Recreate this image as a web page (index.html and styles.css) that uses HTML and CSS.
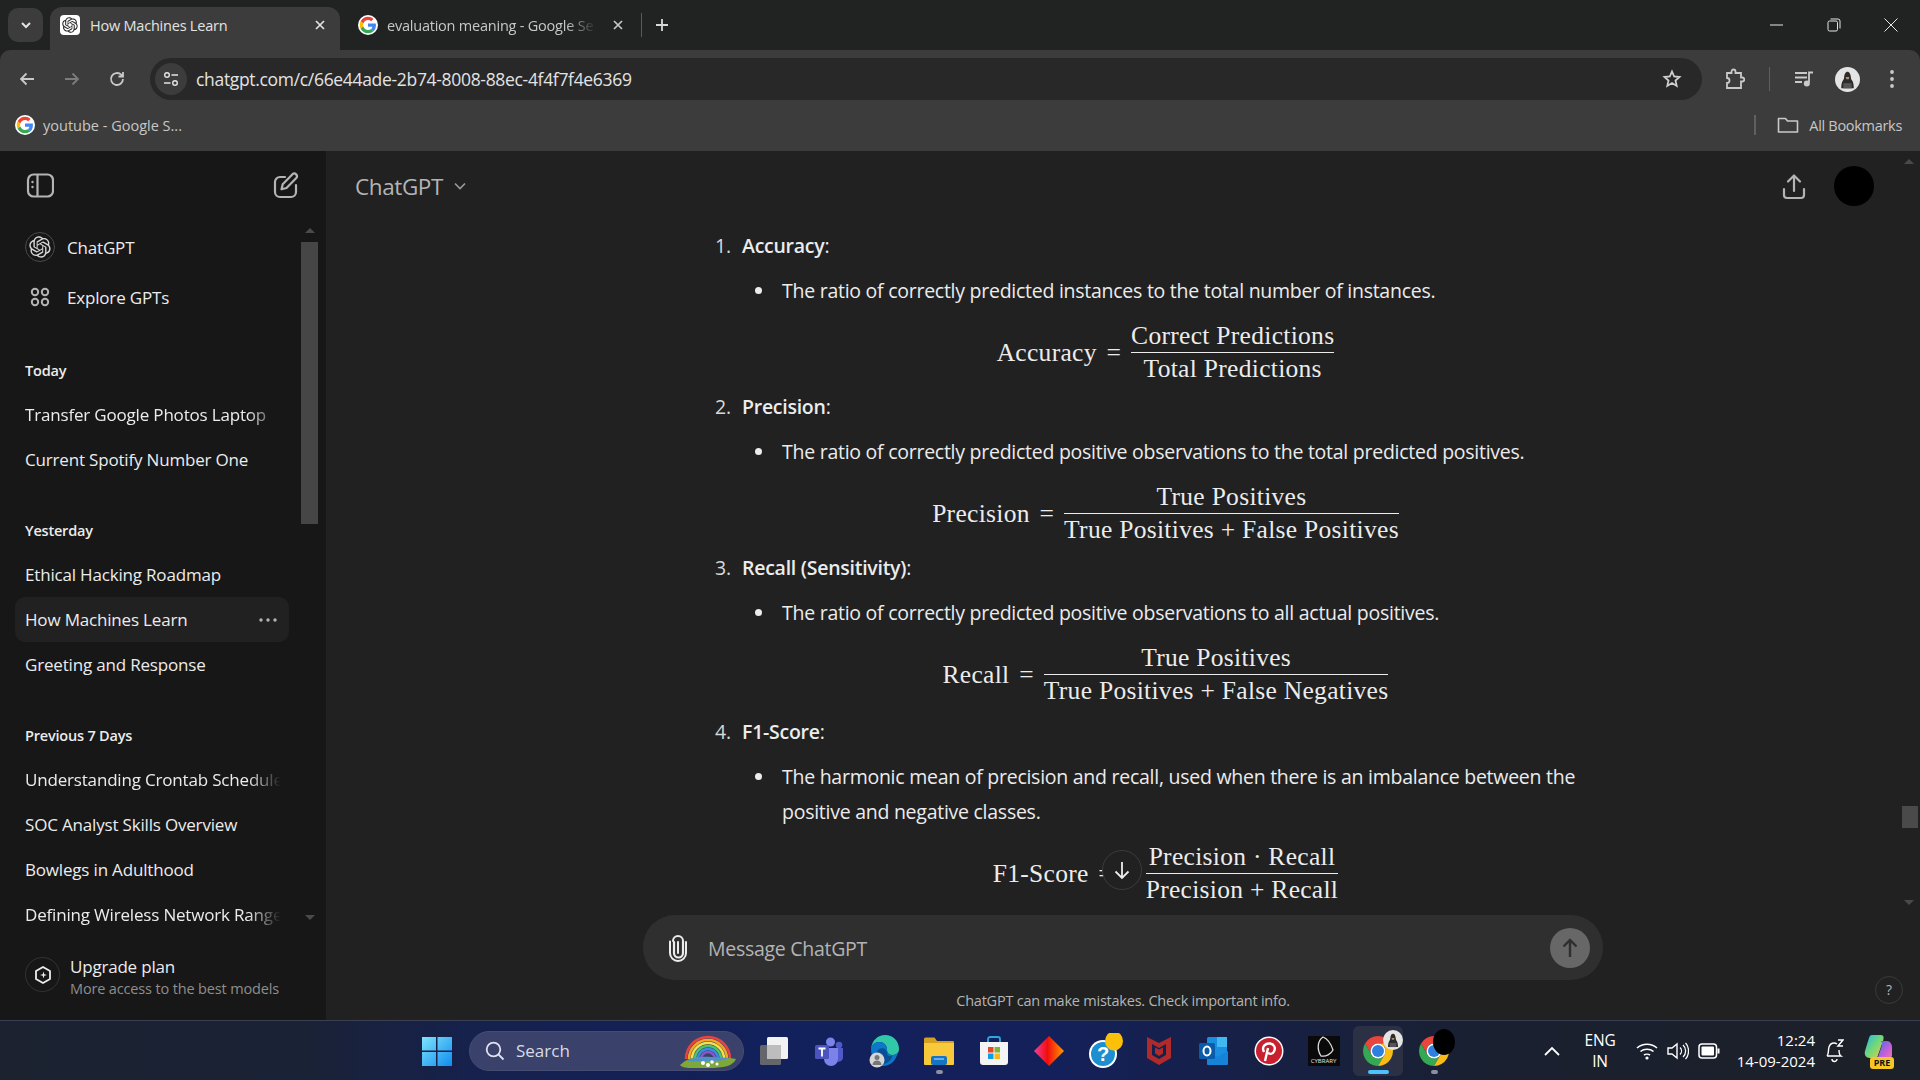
FILE: index.html
```html
<!DOCTYPE html>
<html lang="en">
<head>
<meta charset="utf-8">
<title>How Machines Learn</title>
<link rel="stylesheet" href="styles.css">
</head>
<body>
<svg class="defs" width="0" height="0" aria-hidden="true">
  <symbol id="g-logo" viewBox="-5 -5 58 58">
    <circle cx="24" cy="24" r="29" fill="#fff"/>
    <path fill="#EA4335" d="M24 9.5c3.54 0 6.71 1.22 9.21 3.6l6.85-6.85C35.9 2.38 30.47 0 24 0 14.62 0 6.51 5.38 2.56 13.22l7.98 6.19C12.43 13.72 17.74 9.5 24 9.5z"/>
    <path fill="#4285F4" d="M46.98 24.55c0-1.57-.15-3.09-.38-4.55H24v9.02h12.94c-.58 2.96-2.26 5.48-4.78 7.18l7.73 6c4.51-4.18 7.09-10.36 7.09-17.65z"/>
    <path fill="#FBBC05" d="M10.53 28.59c-.48-1.45-.76-2.99-.76-4.59s.27-3.14.76-4.59l-7.98-6.19C.92 16.46 0 20.12 0 24c0 3.88.92 7.54 2.56 10.78l7.97-6.19z"/>
    <path fill="#34A853" d="M24 48c6.48 0 11.93-2.13 15.89-5.81l-7.73-6c-2.15 1.45-4.92 2.3-8.16 2.3-6.26 0-11.57-4.22-13.47-9.91l-7.98 6.19C6.51 42.62 14.62 48 24 48z"/>
  </symbol>
  <symbol id="gpt-logo" viewBox="0 0 41 41">
    <path fill="currentColor" d="M37.5324 16.8707C37.9808 15.5241 38.1363 14.0974 37.9886 12.6859C37.8409 11.2744 37.3934 9.91076 36.676 8.68622C35.6126 6.83404 33.9882 5.3676 32.0373 4.4985C30.0864 3.62941 27.9098 3.40259 25.8215 3.85078C24.8796 2.7893 23.7219 1.94125 22.4257 1.36341C21.1295 0.785575 19.7249 0.491269 18.3058 0.500197C16.1708 0.495044 14.0893 1.16803 12.3614 2.42214C10.6335 3.67624 9.34853 5.44666 8.6917 7.47815C7.30085 7.76286 5.98686 8.3414 4.8377 9.17505C3.68854 10.0087 2.73073 11.0782 2.02839 12.312C0.956464 14.1591 0.498905 16.2988 0.721698 18.4228C0.944492 20.5467 1.83612 22.5449 3.268 24.1293C2.81966 25.4759 2.66413 26.9026 2.81182 28.3141C2.95951 29.7256 3.40701 31.0892 4.12437 32.3138C5.18791 34.1659 6.8123 35.6322 8.76321 36.5013C10.7141 37.3704 12.8907 37.5973 14.9789 37.1492C15.9208 38.2107 17.0786 39.0587 18.3747 39.6366C19.6709 40.2144 21.0755 40.5087 22.4946 40.4998C24.6307 40.5054 26.7133 39.8321 28.4418 38.5772C30.1704 37.3223 31.4556 35.5506 32.1119 33.5179C33.5027 33.2332 34.8167 32.6547 35.9659 31.821C37.115 30.9874 38.0728 29.9178 38.7752 28.684C39.8458 26.8371 40.3023 24.6979 40.0789 22.5748C39.8556 20.4517 38.9639 18.4544 37.5324 16.8707ZM22.4978 37.8849C20.7443 37.8874 19.0459 37.2733 17.6994 36.1501C17.7601 36.117 17.8666 36.0586 17.936 36.0161L25.9004 31.4156C26.1003 31.3019 26.2663 31.137 26.3813 30.9378C26.4964 30.7386 26.5563 30.5124 26.5549 30.2825V19.0542L29.9213 20.998C29.9389 21.0068 29.9541 21.0198 29.9656 21.0359C29.977 21.052 29.9842 21.0707 29.9867 21.0902V30.3889C29.9842 32.375 29.1946 34.2791 27.7909 35.6841C26.3872 37.0892 24.4838 37.8806 22.4978 37.8849ZM6.39227 31.0064C5.51397 29.4888 5.19742 27.7107 5.49804 25.9832C5.55718 26.0187 5.66048 26.0818 5.73461 26.1244L13.699 30.7248C13.8975 30.8408 14.1233 30.902 14.3532 30.902C14.583 30.902 14.8088 30.8408 15.0073 30.7248L24.731 25.1103V28.9979C24.7321 29.0177 24.7283 29.0376 24.7199 29.0556C24.7115 29.0736 24.6988 29.0893 24.6829 29.1012L16.6317 33.7497C14.9096 34.7416 12.8643 35.0097 10.9447 34.4954C9.02506 33.9811 7.38785 32.7263 6.39227 31.0064ZM4.29707 13.6194C5.17156 12.0998 6.55279 10.9364 8.19885 10.3327C8.19885 10.4013 8.19491 10.5228 8.19491 10.6071V19.808C8.19351 20.0378 8.25334 20.2638 8.36823 20.4629C8.48312 20.6619 8.64893 20.8267 8.84863 20.9404L18.5723 26.5542L15.206 28.4979C15.1894 28.5089 15.1703 28.5155 15.1505 28.5173C15.1307 28.5191 15.1107 28.516 15.0924 28.5082L7.04046 23.8557C5.32135 22.8601 4.06716 21.2235 3.55289 19.3046C3.03862 17.3858 3.30624 15.3413 4.29707 13.6194ZM31.955 20.0556L22.2312 14.4411L25.5976 12.4981C25.6142 12.4872 25.6333 12.4805 25.6531 12.4787C25.6729 12.4769 25.6928 12.4801 25.7111 12.4879L33.7631 17.1364C34.9967 17.849 36.0017 18.8982 36.6606 20.1613C37.3194 21.4244 37.6047 22.849 37.4832 24.2684C37.3617 25.6878 36.8382 27.0432 35.9743 28.1759C35.1103 29.3086 33.9415 30.1717 32.6047 30.6641C32.6047 30.5947 32.6047 30.4733 32.6047 30.3889V21.188C32.6066 20.9586 32.5474 20.7328 32.4332 20.5338C32.319 20.3348 32.154 20.1698 31.955 20.0556ZM35.3055 15.0128C35.2464 14.9765 35.1431 14.9142 35.069 14.8717L27.1045 10.2712C26.906 10.1554 26.6803 10.0943 26.4504 10.0943C26.2206 10.0943 25.9948 10.1554 25.7963 10.2712L16.0726 15.8858V11.9982C16.0715 11.9783 16.0753 11.9585 16.0837 11.9405C16.0921 11.9225 16.1048 11.9068 16.1207 11.8949L24.1719 7.25025C25.4053 6.53903 26.8158 6.19376 28.2383 6.25482C29.6608 6.31589 31.0364 6.78077 32.2044 7.59508C33.3723 8.40939 34.2842 9.53945 34.8334 10.8531C35.3826 12.1667 35.5464 13.6095 35.3055 15.0128ZM14.2424 21.9419L10.8752 19.9981C10.8576 19.9893 10.8423 19.9763 10.8309 19.9602C10.8195 19.9441 10.8122 19.9254 10.8098 19.9058V10.6071C10.8107 9.18295 11.2173 7.78848 11.9819 6.58696C12.7466 5.38544 13.8377 4.42659 15.1275 3.82264C16.4173 3.21869 17.8524 2.99464 19.2649 3.1767C20.6775 3.35876 22.0089 3.93941 23.1034 4.85067C23.0427 4.88379 22.937 4.94215 22.8668 4.98473L14.9024 9.58517C14.7025 9.69878 14.5366 9.86356 14.4215 10.0626C14.3065 10.2616 14.2466 10.4877 14.2479 10.7175L14.2424 21.9419ZM16.071 17.9991L20.4018 15.4978L24.7325 17.9975V22.9985L20.4018 25.4983L16.071 22.9985V17.9991Z"/>
  </symbol>
  <symbol id="chrome" viewBox="4 4 40 40">
    <path fill="#E8453C" d="M6.68 14A20 20 0 0 1 41.32 14H24A10 10 0 0 0 15.34 29Z"/>
    <path fill="#34A853" d="M6.68 14L15.34 29A10 10 0 0 0 32.66 29L24 44A20 20 0 0 1 6.68 14Z"/>
    <path fill="#F9BC15" d="M24 14H41.32A20 20 0 0 1 24 44L32.66 29A10 10 0 0 0 24 14Z"/>
    <circle cx="24" cy="24" r="10" fill="#fff"/>
    <circle cx="24" cy="24" r="8" fill="#2F7FE0"/>
  </symbol>
  <symbol id="hacker" viewBox="0 0 24 24">
    <circle cx="12" cy="12" r="12" fill="#e4e4e4"/>
    <path fill="#2b2b2b" d="M12 4.500c-2 0-3 2.500-3.200 5-.1 1.500-.5 2.500-1 3.300C6.600 14.200 6 16.800 6 20.500h12c0-3.700-.6-6.300-1.800-7.700-.5-.8-.9-1.800-1-3.300-.2-2.500-1.200-5-3.200-5z"/>
    <path fill="#b08f74" d="M10.300 9.500h3.400l-.5 2.200h-2.400z"/>
    <path fill="#555" d="M8 15.500h8v5H8z"/>
  </symbol>
</svg>

<div class="tabstrip">
  <button class="tabsearch" aria-label="Search tabs"><svg width="14" height="14" viewBox="0 0 14 14"><path d="M3 5l4 4 4-4" fill="none" stroke="#e3e3e3" stroke-width="2"/></svg></button>
  <div class="tab active">
    <span class="favicon-box"><svg class="ic-16" style="color:#222"><use href="#gpt-logo"/></svg></span>
    <span class="tab-title">How Machines Learn</span>
    <svg class="tab-x" width="12" height="12" viewBox="0 0 12 12"><path d="M2 2l8 8M10 2l-8 8" stroke="#e3e3e3" stroke-width="1.700"/></svg>
  </div>
  <div class="tab other">
    <svg class="ic-20"><use href="#g-logo"/></svg>
    <span class="tab-title fade-tab">evaluation meaning - Google Se</span>
    <svg class="tab-x" width="12" height="12" viewBox="0 0 12 12"><path d="M2 2l8 8M10 2l-8 8" stroke="#c7c7c7" stroke-width="1.700"/></svg>
  </div>
  <span class="tab-sep"></span>
  <svg class="newtab" width="16" height="16" viewBox="0 0 16 16"><path d="M8 2v12M2 8h12" stroke="#d8d8d8" stroke-width="1.800"/></svg>
  <div class="win-controls">
    <svg width="14" height="14" viewBox="0 0 14 14"><path d="M0 7h13" stroke="#e6e6e6" stroke-width="1"/></svg>
    <svg width="14" height="14" viewBox="0 0 14 14"><rect x="1" y="3" width="9.500" height="10" rx="1.500" fill="none" stroke="#e6e6e6"/><path d="M3.500 1h7.500a2 2 0 0 1 2 2v7.500" fill="none" stroke="#e6e6e6"/></svg>
    <svg width="14" height="14" viewBox="0 0 14 14"><path d="M0.500 0.500l13 13M13.500 0.500l-13 13" stroke="#e6e6e6" stroke-width="1"/></svg>
  </div>
</div>

<div class="toolbar-wrap">
  <div class="toolbar">
    <div class="nav-buttons">
      <svg width="18" height="18" viewBox="0 0 18 18"><path d="M16 9H3M8.500 3.500L3 9l5.500 5.500" fill="none" stroke="#c9c9c9" stroke-width="1.800"/></svg>
      <svg width="18" height="18" viewBox="0 0 18 18"><path d="M2 9h13M9.500 3.500L15 9l-5.500 5.500" fill="none" stroke="#7c7c7c" stroke-width="1.800"/></svg>
      <svg width="18" height="18" viewBox="0 0 18 18"><path d="M15 9a6 6 0 1 1-1.800-4.300L15 6.500M15 2v4.500h-4.500" fill="none" stroke="#c9c9c9" stroke-width="1.800"/></svg>
    </div>
    <div class="omnibox">
      <span class="tune"><svg width="16" height="16" viewBox="0 0 16 16"><circle cx="4" cy="4" r="2.300" fill="none" stroke="#e3e3e3" stroke-width="1.400"/><path d="M8.500 4H15M1 12h6.500" stroke="#e3e3e3" stroke-width="1.400"/><circle cx="12" cy="12" r="2.300" fill="none" stroke="#e3e3e3" stroke-width="1.400"/></svg></span>
      <span class="url">chatgpt.com/c/66e44ade-2b74-8008-88ec-4f4f7f4e6369</span>
      <svg class="star" width="20" height="20" viewBox="0 0 20 20"><path d="M10 2.500l2.200 5 5.300.5-4 3.600 1.200 5.300L10 14.100l-4.700 2.800 1.200-5.300-4-3.600 5.300-.5z" fill="none" stroke="#d0d0d0" stroke-width="1.800"/></svg>
    </div>
    <div class="tool-icons">
      <svg class="t-puzzle" width="20" height="22" viewBox="0 0 20 22"><path d="M2 5h4.500V3.500a2 2 0 0 1 4 0V5H16v4.500h1.300a2 2 0 0 1 0 4H16V20H2v-5a2.500 2.500 0 0 0 0-5z" fill="none" stroke="#c9c9c9" stroke-width="1.800"/></svg>
      <span class="t-sep"></span>
      <svg class="t-media" width="20" height="18" viewBox="0 0 20 18"><path d="M1 3h12M1 7.500h12M1 12h7" stroke="#c9c9c9" stroke-width="1.800"/><path d="M15 12.500V2.500h4" fill="none" stroke="#c9c9c9" stroke-width="1.800"/><circle cx="12.800" cy="13.500" r="3" fill="#c9c9c9"/></svg>
      <svg class="t-avatar"><use href="#hacker"/></svg>
      <svg class="t-dots" width="6" height="20" viewBox="0 0 6 20"><circle cx="3" cy="3" r="1.900" fill="#c9c9c9"/><circle cx="3" cy="10" r="1.900" fill="#c9c9c9"/><circle cx="3" cy="17" r="1.900" fill="#c9c9c9"/></svg>
    </div>
  </div>
  <div class="bookmarks">
    <svg class="ic-20"><use href="#g-logo"/></svg>
    <span class="bm-title">youtube - Google S...</span>
    <span class="bm-spacer"></span>
    <span class="bm-sep"></span>
    <svg width="22" height="18" viewBox="0 0 22 18"><path d="M1.500 2.500h7l2 2.500h10v11h-19z" fill="none" stroke="#c9c9c9" stroke-width="1.600" stroke-linejoin="round"/></svg>
    <span class="bm-all">All Bookmarks</span>
  </div>
</div>

<div class="app">
  <aside class="sidebar">
    <div class="side-top">
      <svg width="28" height="28" viewBox="0 0 28 28"><rect x="2" y="3.500" width="25" height="22" rx="5.500" fill="none" stroke="#b4b4b4" stroke-width="2.200"/><path d="M11.500 4v21" stroke="#b4b4b4" stroke-width="2.200"/><circle cx="6.500" cy="11" r="1.200" fill="#b4b4b4"/><circle cx="6.500" cy="16" r="1.200" fill="#b4b4b4"/></svg>
      <svg width="26" height="28" viewBox="0 0 26 28"><path d="M12 6H7a5 5 0 0 0-5 5v10a5 5 0 0 0 5 5h11a5 5 0 0 0 5-5v-7" fill="none" stroke="#b4b4b4" stroke-width="2.200" stroke-linecap="round"/><path d="M19.500 3.200a2.700 2.700 0 0 1 3.800 3.800L13.500 17l-5 1.200 1.200-5z" fill="none" stroke="#b4b4b4" stroke-width="2.200" stroke-linejoin="round"/></svg>
    </div>
    <nav class="side-list">
      <div class="top-item"><span class="gpt-circle"><svg class="ic-22"><use href="#gpt-logo"/></svg></span><span>ChatGPT</span></div>
      <div class="top-item"><span class="grid-ic"><svg width="20" height="20" viewBox="0 0 20 20"><g fill="none" stroke="#b4b4b4" stroke-width="2"><circle cx="5" cy="5" r="3.200"/><circle cx="15" cy="5" r="3.200"/><circle cx="5" cy="15" r="3.200"/><circle cx="15" cy="15" r="3.200"/></g></svg></span><span>Explore GPTs</span></div>
      <section class="group">
        <h3>Today</h3>
        <div class="chat fade">Transfer Google Photos Laptop</div>
        <div class="chat">Current Spotify Number One</div>
      </section>
      <section class="group">
        <h3>Yesterday</h3>
        <div class="chat">Ethical Hacking Roadmap</div>
        <div class="chat selected">How Machines Learn<svg width="18" height="4" viewBox="0 0 18 4"><circle cx="2" cy="2" r="1.700" fill="#b4b4b4"/><circle cx="9" cy="2" r="1.700" fill="#b4b4b4"/><circle cx="16" cy="2" r="1.700" fill="#b4b4b4"/></svg></div>
        <div class="chat">Greeting and Response</div>
      </section>
      <section class="group">
        <h3>Previous 7 Days</h3>
        <div class="chat fade">Understanding Crontab Schedule</div>
        <div class="chat">SOC Analyst Skills Overview</div>
        <div class="chat">Bowlegs in Adulthood</div>
        <div class="chat fade">Defining Wireless Network Range</div>
      </section>
      <span class="sb-arrow-up"></span>
      <span class="sb-thumb"></span>
      <span class="sb-arrow-down"></span>
    </nav>
    <div class="upgrade">
      <span class="up-circle"><svg width="20" height="20" viewBox="0 0 20 20"><path d="M10 2l7 4v8l-7 4-7-4V6z" fill="none" stroke="#ececec" stroke-width="1.800" stroke-linejoin="round"/><path d="M10.500 6.500l.8 2.700 2.700.8-2.700.8-.8 2.700-.8-2.700-2.700-.8 2.700-.8z" fill="#ececec"/></svg></span>
      <div class="up-text"><div class="up-title">Upgrade plan</div><div class="up-sub">More access to the best models</div></div>
    </div>
  </aside>

  <main class="main">
    <header class="main-head">
      <div class="model">ChatGPT<svg width="14" height="14" viewBox="0 0 14 14"><path d="M2 4.500l5 5 5-5" fill="none" stroke="#9b9b9b" stroke-width="1.600"/></svg></div>
      <div class="head-right">
        <svg width="26" height="28" viewBox="0 0 26 28"><path d="M13 19V4M7 9.500L13 3.500l6 6" fill="none" stroke="#b4b4b4" stroke-width="2.200" stroke-linecap="round" stroke-linejoin="round"/><path d="M3 17v6a3 3 0 0 0 3 3h14a3 3 0 0 0 3-3v-6" fill="none" stroke="#b4b4b4" stroke-width="2.200" stroke-linecap="round"/></svg>
        <span class="black-dot"></span>
      </div>
    </header>
    <div class="scroll">
      <article class="answer">
        <div class="item">
          <div class="hd"><span class="mk">1.</span><span><b>Accuracy</b>:</span></div>
          <div class="bl"><span class="dot"></span><span>The ratio of correctly predicted instances to the total number of instances.</span></div>
          <div class="math"><span class="lhs">Accuracy =</span><span class="frac"><span class="n">Correct Predictions</span><span class="d">Total Predictions</span></span></div>
        </div>
        <div class="item">
          <div class="hd"><span class="mk">2.</span><span><b>Precision</b>:</span></div>
          <div class="bl"><span class="dot"></span><span>The ratio of correctly predicted positive observations to the total predicted positives.</span></div>
          <div class="math"><span class="lhs">Precision =</span><span class="frac"><span class="n">True Positives</span><span class="d">True Positives + False Positives</span></span></div>
        </div>
        <div class="item wide">
          <div class="hd"><span class="mk">3.</span><span><b>Recall (Sensitivity)</b>:</span></div>
          <div class="bl"><span class="dot"></span><span>The ratio of correctly predicted positive observations to all actual positives.</span></div>
          <div class="math"><span class="lhs">Recall =</span><span class="frac"><span class="n">True Positives</span><span class="d">True Positives + False Negatives</span></span></div>
        </div>
        <div class="item">
          <div class="hd"><span class="mk">4.</span><span><b>F1-Score</b>:</span></div>
          <div class="bl"><span class="dot"></span><span>The harmonic mean of precision and recall, used when there is an imbalance between the<br>positive and negative classes.</span></div>
          <div class="math"><span class="lhs">F1-Score = 2</span><span class="frac"><span class="n">Precision · Recall</span><span class="d">Precision + Recall</span></span></div>
        </div>
      </article>
      <button class="to-bottom" aria-label="Scroll down"><svg width="20" height="22" viewBox="0 0 20 22"><path d="M10 3v16M3.500 12.500L10 19l6.500-6.500" fill="none" stroke="#ececec" stroke-width="1.800"/></svg></button>
    </div>
    <div class="composer">
      <svg class="clip" width="20" height="28" viewBox="0 0 20 28"><path d="M6 8v11a4.500 4.500 0 0 0 9 0V7" fill="none" stroke="#ececec" stroke-width="2.200" stroke-linecap="round"/><path d="M15 7a5 5 0 0 0-10 0M2 7.500V19a8 8 0 0 0 16 0V8" fill="none" stroke="#ececec" stroke-width="2" stroke-linecap="round"/><path d="M10 8v11" stroke="#ececec" stroke-width="2" stroke-linecap="round"/></svg>
      <span class="placeholder">Message ChatGPT</span>
      <span class="send"><svg width="20" height="24" viewBox="0 0 20 24"><path d="M10 21V4M3.500 10.500L10 4l6.500 6.500" fill="none" stroke="#2f2f2f" stroke-width="2.400"/></svg></span>
    </div>
    <div class="disclaimer">ChatGPT can make mistakes. Check important info.</div>
    <span class="help">?</span>
    <span class="m-arrow-up"></span>
    <span class="m-thumb"></span>
    <span class="m-arrow-down"></span>
  </main>
</div>

<footer class="taskbar">
  <svg class="winlogo" width="30" height="30" viewBox="0 0 30 30"><defs><linearGradient id="wl" x1="0" y1="0" x2="1" y2="1"><stop offset="0" stop-color="#7fe3fb"/><stop offset="1" stop-color="#0f8cf0"/></linearGradient></defs><path fill="url(#wl)" d="M0 1h14v13.500H0zM15.500 1H30v13.500H15.500zM0 16h14v14H0zM15.500 16H30v14H15.500z"/></svg>
  <div class="searchbox">
    <svg width="22" height="22" viewBox="0 0 22 22"><circle cx="9.500" cy="9.500" r="6.800" fill="none" stroke="#dfe3ee" stroke-width="1.800"/><path d="M14.500 14.500l5 5" stroke="#dfe3ee" stroke-width="1.800"/></svg>
    <span>Search</span>
    <svg class="rainbow" width="58" height="36" viewBox="0 0 58 36"><g fill="none" stroke-width="2.600"><path d="M7 26a22 22 0 0 1 44 0" stroke="#e64343"/><path d="M10 26a19 19 0 0 1 38 0" stroke="#f5a623"/><path d="M13 26a16 16 0 0 1 32 0" stroke="#f4e04d"/><path d="M16 26a13 13 0 0 1 26 0" stroke="#4cc46a"/><path d="M19 26a10 10 0 0 1 20 0" stroke="#3a8de0"/><path d="M22 26a7 7 0 0 1 14 0" stroke="#8a56c9"/></g><path d="M1 32c8-7 14-9 28-7s22-1 28 1c-3 7-12 9-28 9S4 36 1 32z" fill="#7da83a"/><path d="M8 28c6-3 12-5 24-4 8 0 14 1 18 1-6 3-12 3-20 3s-16 1-22 0z" fill="#4f91c8"/><g fill="#fff"><circle cx="24" cy="30" r="2"/><circle cx="29" cy="32" r="2"/><circle cx="33" cy="29" r="1.800"/><circle cx="38" cy="31" r="1.500"/></g></svg>
  </div>
  <div class="tb-apps">
    <span class="app-cell"><svg width="30" height="30" viewBox="0 0 30 30"><rect x="8" y="1" width="21" height="22" rx="1.500" fill="#f2f2f2"/><rect x="1" y="9" width="21" height="20" rx="1.500" fill="#6e6e6e" fill-opacity=".9"/><rect x="8" y="9" width="14" height="14" fill="#bdbdbd"/></svg></span>
    <span class="app-cell"><svg width="30" height="30" viewBox="0 0 30 30"><circle cx="16.500" cy="6" r="4.500" fill="#7b83eb"/><circle cx="25" cy="9" r="3.300" fill="#5059c9"/><path d="M21 12h8v9a4.500 4.500 0 0 1-8 3z" fill="#5059c9"/><path d="M10 12h14v11a7 7 0 0 1-14 0z" fill="#7b83eb"/><rect x="1" y="9" width="14" height="14" rx="1.500" fill="#4b53bc"/><path d="M4.500 12.500h7M8 12.500v8" stroke="#fff" stroke-width="1.800"/></svg></span>
    <span class="app-cell"><svg width="30" height="34" viewBox="0 0 30 34"><path d="M2 15C3 6 9 1 16 1c8 0 14 6 14 14 0 3-2 6-6 6-4 0-6-2-6-5 0-5-3-8-8-8-4 0-7 3-8 7z" fill="#31c8a8"/><path d="M2 15c0-4 4-7 8-7 5 0 8 3 8 8 0 3 2 5 6 5 2 0 4-1 5-3-2 9-8 14-15 14C7 32 2 24 2 15z" fill="#0c78c9"/><path d="M10 15c4-2 8 0 8 4 0 3 3 4 6 2-2 6-6 9-11 9-3 0-5-1-6-2-1-5 0-11 3-13z" fill="#0a4f93"/><circle cx="8" cy="26" r="7.500" fill="#d6d6d6"/><circle cx="8" cy="23.500" r="2.500" fill="#777"/><path d="M3.500 31c0-3 2-4.500 4.500-4.500s4.500 1.500 4.500 4.500z" fill="#777"/></svg></span>
    <span class="app-cell with-dot"><svg width="30" height="28" viewBox="0 0 30 28"><path d="M0 2a1.500 1.500 0 0 1 1.500-1.500h9L13 4h16a1 1 0 0 1 1 1v2H0z" fill="#d6a020"/><path d="M0 6h30v21a1 1 0 0 1-1 1H1a1 1 0 0 1-1-1z" fill="#f9c93c"/><rect x="7" y="19" width="16" height="9" rx="2" fill="#1774c4"/><rect x="10" y="21" width="10" height="2" fill="#5fb0ec"/></svg><i></i></span>
    <span class="app-cell"><svg width="28" height="30" viewBox="0 0 28 30"><path d="M8 6V3a2 2 0 0 1 2-2h8a2 2 0 0 1 2 2v3" fill="none" stroke="#2aa8e0" stroke-width="1.800"/><path d="M0 6h28v20a3 3 0 0 1-3 3H3a3 3 0 0 1-3-3z" fill="#f4f4f4"/><rect x="8" y="11" width="5.500" height="5.500" fill="#e8452c"/><rect x="14.500" y="11" width="5.500" height="5.500" fill="#7cb82f"/><rect x="8" y="17.500" width="5.500" height="5.500" fill="#0e9ee8"/><rect x="14.500" y="17.500" width="5.500" height="5.500" fill="#fdb813"/></svg></span>
    <span class="app-cell"><svg width="30" height="30" viewBox="0 0 30 30"><defs><linearGradient id="dm" x1="0" x2="1" y1="0" y2="0"><stop offset="0" stop-color="#f0409b"/><stop offset=".45" stop-color="#f20d0d"/><stop offset="1" stop-color="#ff9a00"/></linearGradient></defs><path d="M15 0l15 15-15 15L0 15z" fill="url(#dm)"/></svg></span>
    <span class="app-cell"><svg class="help-ic" width="38" height="36" viewBox="0 0 38 36"><circle cx="16" cy="21" r="14" fill="#fff"/><circle cx="16" cy="21" r="12" fill="#1b8fd0"/><text x="16" y="28" class="qmark">?</text><ellipse cx="27" cy="8" rx="9" ry="9.500" fill="#fcc00a"/></svg></span>
    <span class="app-cell"><svg width="26" height="30" viewBox="0 0 26 30"><path d="M1 1l12 6 12-6v21l-12 7-12-7z" fill="#b02a2a"/><path d="M6 8l7 4 7-4v11l-7 4-7-4z" fill="#16204e"/><path d="M9 11.500l4 2 4-2v6l-4 2.500-4-2.500z" fill="#b02a2a"/></svg></span>
    <span class="app-cell"><svg width="32" height="30" viewBox="0 0 32 30"><rect x="9" y="1" width="20" height="20" rx="1.500" fill="#1a8fe0"/><rect x="19" y="1" width="10" height="10" fill="#42b8f0"/><path d="M9 15l10 6 11-6v13a1 1 0 0 1-1 1H10a1 1 0 0 1-1-1z" fill="#1583d8"/><rect x="1" y="7" width="16" height="16" rx="1.500" fill="#0a5cab"/><ellipse cx="9" cy="15" rx="3.500" ry="4.500" fill="none" stroke="#fff" stroke-width="2"/></svg></span>
    <span class="app-cell"><svg width="30" height="30" viewBox="0 0 30 30"><circle cx="15" cy="15" r="14.500" fill="#fff"/><circle cx="15" cy="15" r="13" fill="#c8202f"/><path d="M11 25l3-13M10 16c-3-6 2-9 6-8.500 4 .5 6 4 4 8-1.500 3-5 3-6 1" fill="none" stroke="#fff" stroke-width="2.400"/></svg></span>
    <span class="app-cell"><span class="cybrary"><svg width="26" height="22" viewBox="0 0 26 22"><path d="M12 1C6 5 6 14 10 20c5 1 10-2 12-6C20 8 17 3 12 1z" fill="none" stroke="#ddd" stroke-width="1.300"/></svg><em>CYBRARY</em></span></span>
    <span class="app-cell active-app"><svg class="ic-30"><use href="#chrome"/></svg><svg class="badge"><use href="#hacker"/></svg><i></i></span>
    <span class="app-cell with-dot gray"><svg class="ic-30"><use href="#chrome"/></svg><span class="black-badge"></span><i></i></span>
  </div>
  <div class="tray">
    <svg width="18" height="12" viewBox="0 0 18 12"><path d="M2 10l7-7 7 7" fill="none" stroke="#fff" stroke-width="1.800"/></svg>
    <div class="lang"><span>ENG</span><span>IN</span></div>
    <svg width="22" height="20" viewBox="0 0 22 20"><g fill="none" stroke="#fff" stroke-width="1.600"><path d="M1 7c5.500-5 14.500-5 20 0"/><path d="M4.500 10.500c3.500-3 9.500-3 13 0"/><path d="M8 14c1.500-1 4.500-1 6 0"/></g><circle cx="11" cy="17" r="1.600" fill="#fff"/></svg>
    <svg width="22" height="20" viewBox="0 0 22 20"><path d="M1 7v6h4l5 4V3L5 7z" fill="none" stroke="#fff" stroke-width="1.400"/><path d="M13 6.500c2 2 2 5 0 7M16 4c3.500 3 3.500 9 0 12M18.500 2c4 4 4 12 0 16" fill="none" stroke="#fff" stroke-width="1.300"/></svg>
    <svg width="22" height="16" viewBox="0 0 22 16"><rect x="1" y="1" width="17.500" height="14" rx="3" fill="none" stroke="#fff" stroke-width="1.500"/><rect x="3.500" y="3.500" width="12.500" height="9" rx="1" fill="#fff"/><rect x="19.500" y="5.500" width="2" height="5" fill="#fff"/></svg>
    <div class="clock"><span>12:24</span><span>14-09-2024</span></div>
    <svg width="20" height="26" viewBox="0 0 20 26"><path d="M3 18c2-2 1-6 2-9s3-4 5-4c1 0 2 .2 3 1M3 18h14c-1.500-1-2-3-2-6" fill="none" stroke="#fff" stroke-width="1.400"/><path d="M8 21a2.500 2.500 0 0 0 5 0" fill="none" stroke="#fff" stroke-width="1.400"/><path d="M14 2h5l-5 6h5" fill="none" stroke="#fff" stroke-width="1.500"/></svg>
    <span class="copilot"><svg width="30" height="30" viewBox="0 0 30 30"><defs><linearGradient id="cp" x1="0" y1="0" x2="1" y2="1"><stop offset="0" stop-color="#23b8e8"/><stop offset=".5" stop-color="#72d878"/><stop offset="1" stop-color="#f4c84a"/></linearGradient><linearGradient id="cp2" x1="0" y1="0" x2="1" y2="1"><stop offset="0" stop-color="#3d6cf0"/><stop offset=".6" stop-color="#c760d8"/><stop offset="1" stop-color="#f07aa0"/></linearGradient></defs><path d="M8 2h9c3 0 3 3 2 6l-6 17H6C2 25 0 22 1 18L5 5c.5-2 1.500-3 3-3z" fill="url(#cp)"/><path d="M16 8h7c3 0 5 3 5 6v8c0 3-3 5-6 5h-9l5-15c.5-2-1-4-2-4z" fill="url(#cp2)"/></svg><b>PRE</b></span>
  </div>
</footer>
</body>
</html>
```

FILE: styles.css
```css
* { box-sizing: border-box; }
html, body { margin: 0; height: 100%; overflow: hidden; }
body {
  display: flex;
  flex-direction: column;
  height: 100vh;
  background: #212121;
  color: #ececec;
  font-family: "Open Sans", "Noto Sans", sans-serif;
}
.defs { position: absolute; }
.ic-16 { width: 16px; height: 16px; }
.ic-20 { width: 20px; height: 20px; flex: none; }
.ic-22 { width: 22px; height: 22px; color: #d8d8d8; }
.ic-30 { width: 30px; height: 30px; }
button { border: 0; padding: 0; font: inherit; color: inherit; }

/* Browser tab strip */
.tabstrip {
  height: 50px;
  flex: none;
  display: flex;
  align-items: flex-end;
  background: #202322;
}
.tabsearch {
  width: 35px;
  height: 34px;
  margin: 0 7px 8px 8px;
  border-radius: 10px;
  background: #3c3c3c;
  display: flex;
  align-items: center;
  justify-content: center;
}
.tab {
  height: 43px;
  padding-bottom: 7px;
  display: flex;
  align-items: center;
  font-size: 14.5px;
  letter-spacing: -0.22px;
}
.tab.active {
  width: 290px;
  padding-left: 10px;
  padding-right: 14px;
  background: #3c3c3c;
  border-radius: 12px 12px 0 0;
  color: #e3e3e3;
}
.tab.other {
  width: 301px;
  padding-left: 18px;
  padding-right: 17px;
  color: #c7c7c7;
}
.favicon-box {
  width: 20px;
  height: 20px;
  flex: none;
  display: flex;
  align-items: center;
  justify-content: center;
  background: #fff;
  border-radius: 4px;
}
.tab-title { margin-left: 10px; flex: 1; white-space: nowrap; }
.other .tab-title { margin-left: 9px; }
.fade-tab { -webkit-mask-image: linear-gradient(to right, #000 84%, rgba(0,0,0,.1) 97%); mask-image: linear-gradient(to right, #000 84%, rgba(0,0,0,.1) 97%); }
.tab-x { flex: none; margin-left: 12px; }
.tab-sep { width: 1px; height: 24px; margin: 0 0 13px 0; background: #5a5a5a; }
.newtab { margin: 0 0 17px 12px; }
.win-controls {
  margin-left: auto;
  padding: 0 22px 0 0;
  height: 50px;
  display: flex;
  align-items: center;
  gap: 43px;
}

/* Toolbar */
.toolbar-wrap {
  flex: none;
  height: 101px;
  background: #3c3c3c;
  border-radius: 10px 10px 0 0;
}
.toolbar { height: 57px; padding-top: 8px; display: flex; }
.nav-buttons {
  width: 150px;
  height: 42px;
  padding-left: 18px;
  display: flex;
  align-items: center;
  gap: 27px;
}
.omnibox {
  width: 1552px;
  height: 42px;
  display: flex;
  align-items: center;
  background: #282828;
  border-radius: 21px;
  padding: 0 20px 0 5px;
}
.tune {
  width: 32px;
  height: 32px;
  border-radius: 50%;
  background: #3c3c3c;
  display: flex;
  align-items: center;
  justify-content: center;
}
.url { margin-left: 9px; font-size: 17.5px; letter-spacing: -0.32px; color: #e3e3e3; white-space: nowrap; }
.star { margin-left: auto; }
.tool-icons { display: flex; align-items: center; height: 42px; flex: 1; }
.t-puzzle { margin-left: 23px; }
.t-sep { width: 1px; height: 24px; margin-left: 24px; background: #5f5f5f; }
.t-media { margin-left: 24px; }
.t-avatar { width: 25px; height: 25px; margin-left: 21px; }
.t-dots { margin-left: 29px; }
.bookmarks {
  height: 36px;
  padding: 0 18px 0 15px;
  display: flex;
  align-items: center;
  color: #c7c7c7;
  font-size: 14.5px;
  letter-spacing: -0.3px;
}
.bm-title { margin-left: 8px; letter-spacing: 0; }
.bm-spacer { flex: 1; }
.bm-sep { width: 2px; height: 20px; margin-right: 21px; background: #5f5f5f; }
.bm-all { margin-left: 10px; }

/* App */
.app { flex: 1; min-height: 0; display: flex; }
.sidebar {
  width: 326px;
  flex: none;
  display: flex;
  flex-direction: column;
  background: #171717;
}
.side-top {
  height: 68px;
  flex: none;
  padding: 0 27px 0 26px;
  display: flex;
  align-items: center;
  justify-content: space-between;
}
.side-list {
  position: relative;
  flex: 1;
  min-height: 0;
  overflow: hidden;
  padding-top: 3px;
  font-size: 17px;
  letter-spacing: -0.18px;
}
.top-item {
  height: 50px;
  padding-left: 25px;
  display: flex;
  align-items: center;
  gap: 12px;
}
.gpt-circle {
  width: 30px;
  height: 30px;
  border: 1px solid #4a4a4a;
  border-radius: 50%;
  display: flex;
  align-items: center;
  justify-content: center;
}
.grid-ic { width: 30px; display: flex; justify-content: center; }
.group { margin-top: 27px; }
.group h3 {
  margin: 0;
  height: 43px;
  padding-left: 25px;
  display: flex;
  align-items: center;
  font-size: 14.5px;
  font-weight: 600;
  letter-spacing: -0.2px;
}
.chat {
  height: 45px;
  width: 274px;
  margin-left: 15px;
  padding: 0 0 0 10px;
  display: flex;
  align-items: center;
  justify-content: space-between;
  white-space: nowrap;
  border-radius: 10px;
}
.chat.fade {
  -webkit-mask-image: linear-gradient(to right, #000 85%, transparent 97%);
  mask-image: linear-gradient(to right, #000 85%, transparent 97%);
}
.chat.selected { background: #212121; padding-right: 12px; }
.sb-thumb, .sb-arrow-up, .sb-arrow-down, .m-thumb, .m-arrow-up, .m-arrow-down, .help, .to-bottom, .black-badge, .badge { position: absolute; }
.sb-thumb { left: 301px; top: 23px; width: 17px; height: 282px; background: #464646; }
.sb-arrow-up {
  left: 305px; top: 9px;
  border: 5px solid transparent; border-top: 0; border-bottom: 5px solid #4a4a4a;
}
.sb-arrow-down {
  left: 305px; top: 696px;
  border: 5px solid transparent; border-bottom: 0; border-top: 5px solid #4a4a4a;
}
.upgrade {
  height: 82px;
  flex: none;
  padding: 19px 0 0 25px;
  display: flex;
  gap: 10px;
  align-items: flex-start;
}
.up-circle {
  width: 35px;
  height: 35px;
  border: 1px solid #333;
  border-radius: 50%;
  display: flex;
  align-items: center;
  justify-content: center;
}
.up-title { font-size: 17px; letter-spacing: -0.2px; line-height: 24px; margin-top: -2px; }
.up-sub { font-size: 14.5px; letter-spacing: -0.15px; line-height: 20px; color: #8e8e8e; white-space: nowrap; }

/* Main */
.main {
  position: relative;
  flex: 1;
  min-width: 0;
  display: flex;
  flex-direction: column;
  background: #212121;
}
.main-head {
  height: 68px;
  flex: none;
  padding: 2px 46px 0 29px;
  display: flex;
  align-items: center;
  justify-content: space-between;
}
.model {
  display: flex;
  align-items: center;
  gap: 10px;
  font-size: 22.5px;
  letter-spacing: -0.4px;
  color: #b4b4b4;
}
.head-right { display: flex; align-items: center; gap: 27px; }
.black-dot { width: 40px; height: 40px; border-radius: 50%; background: #000; }
.scroll { position: relative; flex: 1; min-height: 0; overflow: hidden; }
.answer {
  width: 894px;
  margin: 9px auto 0;
  padding-left: 39px;
  font-size: 19.5px;
  line-height: 35px;
  letter-spacing: -0.26px;
}
.answer b { font-weight: 600; }
.item { padding-left: 27px; }
.hd { display: flex; margin-left: -27px; }
.mk { width: 27px; color: #d8d8d8; }
.bl { margin-top: 10px; padding-left: 40px; display: flex; position: relative; white-space: nowrap; }
.dot {
  position: absolute;
  left: 13px;
  top: 14px;
  width: 7px;
  height: 7px;
  border-radius: 50%;
  background: #ececec;
}
.math {
  margin: 12px 21px 4px 40px;
  display: flex;
  align-items: center;
  justify-content: center;
  gap: 10px;
  font-family: "Liberation Serif", serif;
  font-size: 25.5px;
  line-height: 32px;
  letter-spacing: 0.3px;
  white-space: nowrap;
}
.lhs { word-spacing: 3px; }
.wide .math { margin-bottom: 7px; }
.frac { display: flex; flex-direction: column; text-align: center; }
.n { border-bottom: 1px solid #ececec; }
.to-bottom {
  left: 776px;
  top: 631px;
  width: 40px;
  height: 40px;
  border: 1px solid #3c3c3c;
  border-radius: 50%;
  background: #212121;
  display: flex;
  align-items: center;
  justify-content: center;
}
.composer {
  width: 960px;
  height: 65px;
  margin: 10px auto 0;
  flex: none;
  padding: 0 13px 0 25px;
  display: flex;
  align-items: center;
  background: #2f2f2f;
  border-radius: 32px;
}
.placeholder { margin: 1px 0 0 20px; font-size: 19.5px; letter-spacing: -0.28px; color: #b4b4b4; }
.send {
  margin-left: auto;
  width: 40px;
  height: 40px;
  border-radius: 50%;
  background: #676767;
  display: flex;
  align-items: center;
  justify-content: center;
}
.disclaimer {
  height: 40px;
  flex: none;
  padding-top: 1px;
  text-align: center;
  font-size: 14.5px;
  line-height: 40px;
  letter-spacing: -0.23px;
  color: #b4b4b4;
}
.help {
  right: 17px;
  bottom: 16px;
  width: 28px;
  height: 28px;
  border: 1px solid #3a3a3a;
  border-radius: 50%;
  font-size: 14px;
  line-height: 26px;
  text-align: center;
  color: #b4b4b4;
}
.m-thumb { right: 2px; top: 655px; width: 16px; height: 22px; background: #4a4a4a; }
.m-arrow-up {
  right: 6px; top: 8px;
  border: 5px solid transparent; border-top: 0; border-bottom: 5px solid #4a4a4a;
}
.m-arrow-down {
  right: 6px; top: 749px;
  border: 5px solid transparent; border-bottom: 0; border-top: 5px solid #4a4a4a;
}

/* Taskbar */
.taskbar {
  height: 60px;
  flex: none;
  position: relative;
  display: flex;
  align-items: center;
  border-top: 1px solid #3a3f52;
  background: linear-gradient(90deg, #1c2230 0%, #1a2236 16%, #16214c 24%, #12205c 40%, #14205a 55%, #172042 67%, #1a2030 78%, #1c2028 100%);
  color: #fff;
}
.winlogo { margin-left: 422px; flex: none; }
.searchbox {
  width: 275px;
  height: 40px;
  margin-left: 17px;
  padding: 0 6px 0 14px;
  display: flex;
  align-items: center;
  gap: 10px;
  border-radius: 20px;
  border: 1px solid #444c72;
  background: #3a416b;
  font-size: 17px;
  color: #d8dbe6;
}
.rainbow { margin-left: auto; }
.tb-apps { display: flex; margin-left: 2px; }
.app-cell {
  position: relative;
  width: 55px;
  height: 50px;
  display: flex;
  align-items: center;
  justify-content: center;
}
.app-cell i {
  position: absolute;
  bottom: 2px;
  left: 50%;
  width: 7px;
  height: 4px;
  margin-left: -3px;
  border-radius: 2px;
  background: #8a8fa3;
}
.help-ic { margin-left: 5px; }
.qmark { font-family: "Liberation Sans", sans-serif; font-size: 20px; font-weight: 700; fill: #fff; text-anchor: middle; }
.cybrary {
  width: 32px;
  height: 30px;
  display: flex;
  flex-direction: column;
  align-items: center;
  background: #0a0a0a;
}
.cybrary em { font-style: normal; font-size: 6px; line-height: 7px; color: #e6e6e6; letter-spacing: 0; }
.active-app { background: #2b3044; border-radius: 6px; width: 50px; margin: 0 3px 0 2px; }
.active-app i { width: 21px; margin-left: -10px; background: #4cc2ff; }
.badge { right: 0; top: 4px; width: 20px; height: 20px; }
.black-badge { right: 6px; top: 3px; width: 22px; height: 26px; border-radius: 50%; background: #000; }
.tray { margin-left: auto; padding-right: 24px; display: flex; align-items: center; }
.tray > svg:first-child { margin-right: 20px; }
.lang { display: flex; flex-direction: column; align-items: center; width: 38px; margin-right: 17px; font-size: 15.5px; line-height: 21px; letter-spacing: -0.2px; }
.tray > svg:nth-of-type(2) { margin-right: 9px; }
.tray > svg:nth-of-type(3) { margin-right: 9px; }
.clock { display: flex; flex-direction: column; align-items: flex-end; width: 86px; margin: 0 9px 0 9px; font-size: 15px; line-height: 21px; letter-spacing: 0; }
.copilot { position: relative; margin-left: 20px; width: 32px; height: 36px; display: block; }
.copilot b {
  position: absolute;
  left: 6px;
  bottom: 0;
  width: 24px;
  height: 12px;
  border-radius: 3px;
  background: #f7c626;
  color: #111;
  font-size: 9px;
  line-height: 12px;
  text-align: center;
}
```
